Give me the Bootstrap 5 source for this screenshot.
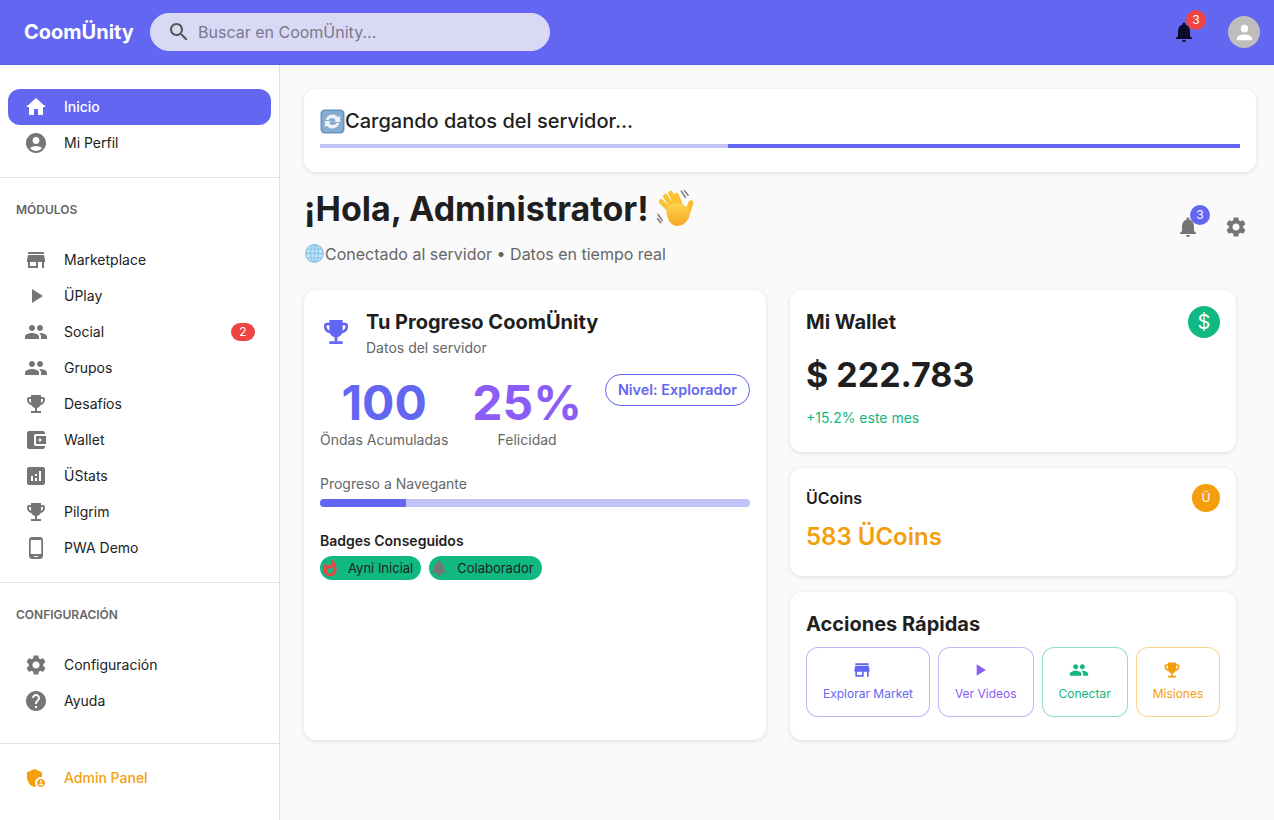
<!DOCTYPE html>
<html lang="es">
<head>
  <meta charset="UTF-8" />
  <meta name="viewport" content="width=device-width, initial-scale=1.0" />
  <title>CoomÜnity</title>
  <link href="https://cdn.jsdelivr.net/npm/bootstrap@5.3.0/dist/css/bootstrap.min.css" rel="stylesheet"/>
  <style>
    body { font-family: Inter, "Liberation Sans", sans-serif; background: #fafafa; color: #1f1f1f; height: 820px; overflow: hidden; }
    .ico { width: 24px; height: 24px; fill: currentColor; flex: none; }
    .topbar { height: 65px; background: #6366f1; padding: 0 14px 0 24px; border-bottom: 1px solid #5a5de0; }
    .brand-name { font-size: 20px; font-weight: 700; color: #fff; width: 126px; }
    .search-box { width: 400px; height: 38px; border-radius: 19px; background: #d9d9f5; border: 1px solid #dcdcf7; padding-left: 16px; color: #555; }
    .search-box span { font-size: 16px; color: #78788e; margin-left: 7px; }
    .round-dot { width: 20px; height: 20px; border-radius: 50%; color: #fff; font-size: 12px; top: -10px; right: -10px; }
    .dot-red { background: #ef4444; }
    .dot-indigo { background: #6366f1; }
    .top-bell { color: #0c0c2a; }
    .top-avatar { width: 32px; height: 32px; border-radius: 50%; background: #bdbdbd; color: #fff; margin-left: 32px; }
    .top-avatar .ico { width: 23px; height: 23px; }
    .app-body { height: 755px; }
    .side { width: 280px; flex: none; background: #fff; border-right: 1px solid #e0e0e0; padding-top: 24px; }
    .side-link { height: 36px; margin: 0 8px; padding: 0 16px 2px; border-radius: 12px; color: #222; font-size: 14px; text-decoration: none; }
    .side-link .ico { color: #757575; margin: 2px 16px 0 0; }
    .side-link.on { background: #6366f1; color: #fff; font-weight: 500; }
    .side-link.on .ico { color: #fff; }
    .side-link.admin, .side-link.admin .ico { color: #f59e0b; font-weight: 500; }
    .side-rule { margin: 16px 0 0; border: 0; border-top: 1px solid #e0e0e0; opacity: 1; }
    .side-head { font-size: 12px; font-weight: 600; color: #666; line-height: 18px; padding: 23px 16px 23px; }
    .count-pill { background: #ef4444; color: #fff; font-size: 12px; height: 18px; min-width: 24px; border-radius: 9px; margin-top: 2px; }
    .content { padding: 24px 18px 24px 24px; flex: 1; }
    .soft-card { background: #fff; border: 0; border-radius: 12px; box-shadow: 0 1px 4px rgba(0,0,0,.12); }
    .load-card { height: 83px; padding: 16px; }
    .load-title { font-size: 20px; font-weight: 500; line-height: 32px; color: #1f1f1f; }
    .load-title svg { width: 25px; height: 25px; }
    .load-track { height: 4px; border-radius: 0; background: #c1c2f8; margin-top: 7px; }
    .load-track .progress-bar { background: #6366f1; width: 512px; }
    .hello { font-size: 34px; font-weight: 700; line-height: 40px; margin: 17px 0 0; color: #1f1f1f; }
    .hello svg { width: 38px; height: 38px; vertical-align: -6px; }
    .hello-sub { font-size: 16px; color: #666; line-height: 24px; margin-top: 13px; }
    .hello-sub svg { width: 21px; height: 21px; vertical-align: -4px; }
    .head-tools { color: #757575; gap: 24px; padding-right: 8px; margin-top: 16px; }
    .dash-grid { display: grid; grid-template-columns: 462px 446px; gap: 24px; margin-top: 24px; width: 932px; }
    .left-panel { height: 450px; padding: 16px; }
    .cup { width: 32px; height: 32px; color: #6366f1; margin-right: 14px; margin-top: 10px; }
    .panel-title { font-size: 20px; font-weight: 700; line-height: 32px; color: #1f1f1f; }
    .panel-sub { font-size: 14px; color: #666; line-height: 20px; }
    .stat-num { font-size: 48px; font-weight: 700; line-height: 54px; }
    .stat-label { font-size: 14px; color: #666; line-height: 20px; }
    .txt-indigo { color: #6366f1; }
    .txt-violet { color: #8b5cf6; }
    .level-chip { height: 32px; border: 1px solid #6366f1; border-radius: 16px; padding: 0 12px; font-size: 14.4px; font-weight: 600; color: #6366f1; background: #fff; }
    .stats-row { margin-top: 16px; }
    .stats-col { padding-top: 2px; }
    .prog-label { font-size: 14px; color: #666; line-height: 20px; margin-top: 24px; }
    .prog-track { height: 8px; border-radius: 4px; background: #c1c2f8; margin-top: 5px; }
    .prog-track .progress-bar { background: #6366f1; }
    .badge-head { font-size: 14px; font-weight: 600; line-height: 20px; margin-top: 24px; color: #1f1f1f; }
    .chip-row { margin-top: 5px; }
    .green-chip { height: 24px; border-radius: 12px; background: #10b981; padding: 2px 8px 0 0; font-size: 13px; color: #1f1f1f; }
    .green-chip svg { width: 20px; height: 20px; margin: -2px 8px 0 0; }
    .wallet-panel { height: 162px; padding: 16px; }
    .ucoin-panel { height: 108px; padding: 16px; margin-top: 16px; }
    .actions-panel { height: 148px; padding: 16px; margin-top: 16px; }
    .coin-big { width: 32px; height: 32px; border-radius: 50%; background: #10b981; color: #fff; font-size: 20px; }
    .coin-small { width: 28px; height: 28px; border-radius: 50%; background: #f59e0b; color: #fff; font-size: 12px; }
    .amount { font-size: 34px; font-weight: 700; line-height: 42px; margin-top: 16px; color: #1f1f1f; }
    .trend { font-size: 14px; color: #10b981; line-height: 20px; margin-top: 12px; }
    .ucoin-title { font-size: 16px; font-weight: 600; line-height: 28px; color: #1f1f1f; }
    .ucoin-value { font-size: 24px; font-weight: 600; line-height: 32px; color: #f59e0b; margin-top: 9px; }
    .act-title { font-size: 20px; font-weight: 700; line-height: 32px; color: #1f1f1f; }
    .act-row { margin-top: 7px; }
    .act-btn { height: 70px; border-radius: 12px; border: 1px solid; background: #fff; font-size: 12px; font-weight: 400; padding: 0 16px 2px; line-height: 16px; white-space: nowrap; }
    .act-btn .ico { width: 20px; height: 20px; margin: 0 12px 6px 0; }
    .act-indigo { color: #6366f1; border-color: rgba(99,102,241,.45); }
    .act-violet { color: #8b5cf6; border-color: rgba(139,92,246,.45); }
    .act-green { color: #10b981; border-color: rgba(16,185,129,.45); }
    .act-amber { color: #f59e0b; border-color: rgba(245,158,11,.45); }
  </style>
</head>
<body>
  <svg width="0" height="0" class="position-absolute">
    <symbol id="i-home" viewBox="0 0 24 24"><path d="M10 20v-6h4v6h5v-8h3L12 3 2 12h3v8z"/></symbol>
    <symbol id="i-account" viewBox="0 0 24 24"><path d="M12 2C6.48 2 2 6.48 2 12s4.48 10 10 10 10-4.48 10-10S17.52 2 12 2zm0 4c1.93 0 3.5 1.57 3.5 3.5S13.93 13 12 13s-3.5-1.57-3.5-3.5S10.07 6 12 6zm0 14c-2.03 0-4.43-.82-6.14-2.88C7.55 15.8 9.68 15 12 15s4.45.8 6.14 2.12C16.43 19.18 14.03 20 12 20z"/></symbol>
    <symbol id="i-store" viewBox="0 0 24 24"><path d="M20 4H4v2h16V4zm1 10v-2l-1-5H4l-1 5v2h1v6h10v-6h4v6h2v-6h1zm-9 4H6v-4h6v4z"/></symbol>
    <symbol id="i-play" viewBox="0 0 24 24"><path d="M8 5v14l11-7z"/></symbol>
    <symbol id="i-people" viewBox="0 0 24 24"><path d="M16 11c1.66 0 2.99-1.34 2.99-3S17.66 5 16 5c-1.66 0-3 1.34-3 3s1.34 3 3 3zm-8 0c1.66 0 2.99-1.34 2.99-3S9.66 5 8 5C6.34 5 5 6.34 5 8s1.34 3 3 3zm0 2c-2.33 0-7 1.17-7 3.5V19h14v-2.5c0-2.33-4.67-3.5-7-3.5zm8 0c-.29 0-.62.02-.97.05 1.16.84 1.97 1.97 1.97 3.45V19h6v-2.5c0-2.33-4.67-3.5-7-3.5z"/></symbol>
    <symbol id="i-cup" viewBox="0 0 24 24"><path d="M19 5h-2V3H7v2H5c-1.1 0-2 .9-2 2v1c0 2.55 1.92 4.63 4.39 4.94.63 1.5 1.98 2.63 3.61 2.96V19H7v2h10v-2h-4v-3.1c1.63-.33 2.98-1.46 3.61-2.96C19.08 12.63 21 10.55 21 8V7c0-1.1-.9-2-2-2zM5 8V7h2v3.82C5.84 10.4 5 9.3 5 8zm14 0c0 1.3-.84 2.4-2 2.82V7h2v1z"/></symbol>
    <symbol id="i-wallet" viewBox="0 0 24 24"><path d="M21 18v1c0 1.1-.9 2-2 2H5c-1.11 0-2-.9-2-2V5c0-1.1.89-2 2-2h14c1.1 0 2 .9 2 2v1h-9c-1.11 0-2 .9-2 2v8c0 1.1.89 2 2 2h9zm-9-2h10V8H12v8zm4-2.5c-.83 0-1.5-.67-1.5-1.5s.67-1.5 1.5-1.5 1.5.67 1.5 1.5-.67 1.5-1.5 1.5z"/></symbol>
    <symbol id="i-stats" viewBox="0 0 24 24"><path d="M19 3H5c-1.1 0-2 .9-2 2v14c0 1.1.9 2 2 2h14c1.1 0 2-.9 2-2V5c0-1.1-.9-2-2-2zM9 17H7v-5h2v5zm4 0h-2v-3h2v3zm0-5h-2v-2h2v2zm4 5h-2V7h2v10z"/></symbol>
    <symbol id="i-phone" viewBox="0 0 24 24"><path d="M16 1H8C6.34 1 5 2.34 5 4v16c0 1.66 1.34 3 3 3h8c1.66 0 3-1.34 3-3V4c0-1.66-1.34-3-3-3zm-2 20h-4v-1h4v1zm3.25-3H6.75V4h10.5v14z"/></symbol>
    <symbol id="i-gear" viewBox="0 0 24 24"><path d="M19.14 12.94c.04-.3.06-.61.06-.94 0-.32-.02-.64-.07-.94l2.03-1.58c.18-.14.23-.41.12-.61l-1.92-3.32c-.12-.22-.37-.29-.59-.22l-2.39.96c-.5-.38-1.03-.7-1.62-.94l-.36-2.54c-.04-.24-.24-.41-.48-.41h-3.84c-.24 0-.43.17-.47.41l-.36 2.54c-.59.24-1.13.57-1.62.94l-2.39-.96c-.22-.08-.47 0-.59.22L2.74 8.87c-.12.21-.08.47.12.61l2.03 1.58c-.05.3-.09.63-.09.94s.02.64.07.94l-2.03 1.58c-.18.14-.23.41-.12.61l1.92 3.32c.12.22.37.29.59.22l2.39-.96c.5.38 1.03.7 1.62.94l.36 2.54c.05.24.24.41.48.41h3.84c.24 0 .44-.17.47-.41l.36-2.54c.59-.24 1.13-.56 1.62-.94l2.39.96c.22.08.47 0 .59-.22l1.92-3.32c.12-.22.07-.47-.12-.61l-2.01-1.58zM12 15.6c-1.98 0-3.6-1.62-3.6-3.6s1.62-3.6 3.6-3.6 3.6 1.62 3.6 3.6-1.62 3.6-3.6 3.6z"/></symbol>
    <symbol id="i-help" viewBox="0 0 24 24"><path d="M12 2C6.48 2 2 6.48 2 12s4.48 10 10 10 10-4.48 10-10S17.52 2 12 2zm1 17h-2v-2h2v2zm2.07-7.75l-.9.92C13.45 12.9 13 13.5 13 15h-2v-.5c0-1.1.45-2.1 1.17-2.83l1.24-1.26c.37-.36.59-.86.59-1.41 0-1.1-.9-2-2-2s-2 .9-2 2H8c0-2.21 1.79-4 4-4s4 1.79 4 4c0 .88-.36 1.68-.93 2.25z"/></symbol>
    <symbol id="i-admin" viewBox="0 0 24 24"><path d="M17 11c.34 0 .67.04 1 .09V6.27L10.5 3 3 6.27v4.91c0 4.54 3.2 8.79 7.5 9.82.55-.13 1.08-.32 1.6-.55-.69-.98-1.1-2.17-1.1-3.45 0-3.31 2.69-6 6-6z"/><path d="M17 13c-2.21 0-4 1.79-4 4s1.79 4 4 4 4-1.79 4-4-1.79-4-4-4zm0 1.38c.62 0 1.12.51 1.12 1.12s-.51 1.12-1.12 1.12-1.12-.51-1.12-1.12.5-1.12 1.12-1.12zm0 5.37c-.93 0-1.74-.46-2.24-1.17.05-.72 1.51-1.08 2.24-1.08s2.19.36 2.24 1.08c-.5.71-1.31 1.17-2.24 1.17z"/></symbol>
    <symbol id="i-search" viewBox="0 0 24 24"><path d="M15.5 14h-.79l-.28-.27C15.41 12.59 16 11.11 16 9.5 16 5.91 13.09 3 9.5 3S3 5.91 3 9.5 5.91 16 9.5 16c1.61 0 3.09-.59 4.23-1.57l.27.28v.79l5 4.99L20.49 19l-4.99-5zm-6 0C7.01 14 5 11.99 5 9.5S7.01 5 9.5 5 14 7.01 14 9.5 11.99 14 9.5 14z"/></symbol>
    <symbol id="i-bell" viewBox="0 0 24 24"><path d="M12 22c1.1 0 2-.9 2-2h-4c0 1.1.89 2 2 2zm6-6v-5c0-3.07-1.64-5.64-4.5-6.32V4c0-.83-.67-1.5-1.5-1.5s-1.5.67-1.5 1.5v.68C7.63 5.36 6 7.92 6 11v5l-2 2v1h16v-1l-2-2z"/></symbol>
    <symbol id="i-person" viewBox="0 0 24 24"><path d="M12 12c2.21 0 4-1.79 4-4s-1.79-4-4-4-4 1.79-4 4 1.79 4 4 4zm0 2c-2.67 0-8 1.34-8 4v2h16v-2c0-2.66-5.33-4-8-4z"/></symbol>
  </svg>

  <header class="topbar d-flex align-items-center">
    <div class="brand-name">CoomÜnity</div>
    <div class="search-box d-flex align-items-center">
      <svg class="ico"><use href="#i-search"/></svg>
      <span>Buscar en CoomÜnity...</span>
    </div>
    <div class="ms-auto d-flex align-items-center">
      <div class="position-relative top-bell d-flex">
        <svg class="ico"><use href="#i-bell"/></svg>
        <span class="round-dot dot-red position-absolute d-flex align-items-center justify-content-center">3</span>
      </div>
      <div class="top-avatar d-flex align-items-center justify-content-center"><svg class="ico"><use href="#i-person"/></svg></div>
    </div>
  </header>

  <div class="app-body d-flex">
    <aside class="side">
      <a class="side-link on d-flex align-items-center" href="#"><svg class="ico"><use href="#i-home"/></svg>Inicio</a>
      <a class="side-link d-flex align-items-center" href="#"><svg class="ico"><use href="#i-account"/></svg>Mi Perfil</a>
      <hr class="side-rule">
      <div class="side-head">MÓDULOS</div>
      <a class="side-link d-flex align-items-center" href="#"><svg class="ico"><use href="#i-store"/></svg>Marketplace</a>
      <a class="side-link d-flex align-items-center" href="#"><svg class="ico"><use href="#i-play"/></svg>ÜPlay</a>
      <a class="side-link d-flex align-items-center" href="#"><svg class="ico"><use href="#i-people"/></svg>Social<span class="count-pill ms-auto d-flex align-items-center justify-content-center">2</span></a>
      <a class="side-link d-flex align-items-center" href="#"><svg class="ico"><use href="#i-people"/></svg>Grupos</a>
      <a class="side-link d-flex align-items-center" href="#"><svg class="ico"><use href="#i-cup"/></svg>Desafíos</a>
      <a class="side-link d-flex align-items-center" href="#"><svg class="ico"><use href="#i-wallet"/></svg>Wallet</a>
      <a class="side-link d-flex align-items-center" href="#"><svg class="ico"><use href="#i-stats"/></svg>ÜStats</a>
      <a class="side-link d-flex align-items-center" href="#"><svg class="ico"><use href="#i-cup"/></svg>Pilgrim</a>
      <a class="side-link d-flex align-items-center" href="#"><svg class="ico"><use href="#i-phone"/></svg>PWA Demo</a>
      <hr class="side-rule">
      <div class="side-head">CONFIGURACIÓN</div>
      <a class="side-link d-flex align-items-center" href="#"><svg class="ico"><use href="#i-gear"/></svg>Configuración</a>
      <a class="side-link d-flex align-items-center" href="#"><svg class="ico"><use href="#i-help"/></svg>Ayuda</a>
      <hr class="side-rule mt-4 mb-3">
      <a class="side-link admin d-flex align-items-center" href="#"><svg class="ico"><use href="#i-admin"/></svg>Admin Panel</a>
    </aside>

    <main class="content">
      <div class="soft-card load-card">
        <div class="load-title d-flex align-items-center">
          <svg viewBox="0 0 24 24"><rect x="0.5" y="0.5" width="23" height="23" rx="4" fill="#6494bf"/><rect x="2" y="2" width="20" height="20" rx="3" fill="#86add0"/><path d="M5.5 10.5a6.8 6.8 0 0 1 12-2.6l1.8-1.4v6h-6l2-1.6a4.2 4.2 0 0 0-7.3-.4z" fill="#eef2f6"/><path d="M18.5 13.5a6.8 6.8 0 0 1-12 2.6l-1.8 1.4v-6h6l-2 1.6a4.2 4.2 0 0 0 7.3.4z" fill="#eef2f6"/></svg>
          Cargando datos del servidor...
        </div>
        <div class="progress load-track justify-content-end"><div class="progress-bar"></div></div>
      </div>

      <div class="d-flex justify-content-between align-items-center">
        <div>
          <h1 class="hello">¡Hola, Administrator!
            <svg viewBox="0 0 36 36">
              <defs><linearGradient id="hand" x1="0" y1="0" x2="0" y2="1"><stop offset="0" stop-color="#fdd44f"/><stop offset="1" stop-color="#f5a623"/></linearGradient></defs>
              <g fill="none" stroke-linecap="round">
                <g stroke="#f9c233" stroke-width="4.600">
                  <path d="M16 24 4 12"/><path d="M18 22 8 7"/><path d="M21 20 13 4"/><path d="M24 20 18.500 6"/>
                </g>
                <path d="M28 26 32 13" stroke="#f9bd30" stroke-width="4.800"/>
                <path d="M23 2 27 8M26 1.500 29.500 6M1 24 5 30M.5 28 3.500 32" stroke="#777" stroke-width="1.400"/>
              </g>
              <path d="M9 20C10 12 28 12 30.500 20c1 8-3 15-11.500 15C12.500 35 8.500 27 9 20z" fill="url(#hand)"/>
            </svg>
          </h1>
          <div class="hello-sub"><svg viewBox="0 0 24 24" fill="none" stroke="#8fc7e8" stroke-width="1.500"><circle cx="12" cy="12" r="10" fill="#c6e6f6"/><ellipse cx="12" cy="12" rx="4.500" ry="10"/><path d="M2 12h20M3.500 7h17M3.500 17h17M12 2v20"/></svg>Conectado al servidor • Datos en tiempo real</div>
        </div>
        <div class="head-tools d-flex align-items-center">
          <div class="position-relative d-flex">
            <svg class="ico"><use href="#i-bell"/></svg>
            <span class="round-dot dot-indigo position-absolute d-flex align-items-center justify-content-center">3</span>
          </div>
          <svg class="ico"><use href="#i-gear"/></svg>
        </div>
      </div>

      <div class="dash-grid">
        <div class="soft-card left-panel">
          <div class="d-flex">
            <svg class="ico cup"><use href="#i-cup"/></svg>
            <div>
              <div class="panel-title">Tu Progreso CoomÜnity</div>
              <div class="panel-sub">Datos del servidor</div>
            </div>
          </div>
          <div class="d-flex justify-content-between align-items-start stats-row">
            <div class="d-flex gap-4 text-center stats-col">
              <div><div class="stat-num txt-indigo">100</div><div class="stat-label">Öndas Acumuladas</div></div>
              <div><div class="stat-num txt-violet">25%</div><div class="stat-label">Felicidad</div></div>
            </div>
            <div class="level-chip d-flex align-items-center">Nivel: Explorador</div>
          </div>
          <div class="prog-label">Progreso a Navegante</div>
          <div class="progress prog-track"><div class="progress-bar" style="width: 20%"></div></div>
          <div class="badge-head">Badges Conseguidos</div>
          <div class="d-flex gap-2 chip-row">
            <span class="green-chip d-flex align-items-center"><svg viewBox="0 0 24 24" fill="#ef4444"><path d="M13.500.67s.74 2.650.74 4.800c0 2.060-1.350 3.730-3.410 3.730-2.070 0-3.630-1.670-3.630-3.730l.03-.36C5.210 7.510 4 10.620 4 14c0 4.420 3.580 8 8 8s8-3.580 8-8C20 8.610 17.410 3.800 13.500.67zM11.710 19c-1.780 0-3.220-1.400-3.220-3.140 0-1.620 1.050-2.760 2.810-3.120 1.770-.36 3.600-1.210 4.620-2.580.39 1.290.59 2.650.59 4.040 0 2.650-2.150 4.800-4.800 4.800z"/></svg>Ayni Inicial</span>
            <span class="green-chip d-flex align-items-center"><svg viewBox="0 0 24 24" fill="#757575"><path d="M17 12h2L12 2 5.050 12H7l-3.900 6h6.920v4h3.950v-4H21z"/></svg>Colaborador</span>
          </div>
        </div>

        <div>
          <div class="soft-card wallet-panel">
            <div class="d-flex justify-content-between align-items-center">
              <div class="panel-title">Mi Wallet</div>
              <div class="coin-big d-flex align-items-center justify-content-center">$</div>
            </div>
            <div class="amount">$ 222.783</div>
            <div class="trend">+15.2% este mes</div>
          </div>
          <div class="soft-card ucoin-panel">
            <div class="d-flex justify-content-between align-items-center">
              <div class="ucoin-title">ÜCoins</div>
              <div class="coin-small d-flex align-items-center justify-content-center">Ü</div>
            </div>
            <div class="ucoin-value">583 ÜCoins</div>
          </div>
          <div class="soft-card actions-panel">
            <div class="act-title">Acciones Rápidas</div>
            <div class="d-flex gap-2 act-row">
              <button class="act-btn act-indigo d-flex flex-column align-items-center justify-content-center"><svg class="ico"><use href="#i-store"/></svg>Explorar Market</button>
              <button class="act-btn act-violet d-flex flex-column align-items-center justify-content-center"><svg class="ico"><use href="#i-play"/></svg>Ver Videos</button>
              <button class="act-btn act-green d-flex flex-column align-items-center justify-content-center"><svg class="ico"><use href="#i-people"/></svg>Conectar</button>
              <button class="act-btn act-amber d-flex flex-column align-items-center justify-content-center"><svg class="ico"><use href="#i-cup"/></svg>Misiones</button>
            </div>
          </div>
        </div>
      </div>
    </main>
  </div>
  <script src="https://cdn.jsdelivr.net/npm/bootstrap@5.3.0/dist/js/bootstrap.bundle.min.js"></script>
</body>
</html>
